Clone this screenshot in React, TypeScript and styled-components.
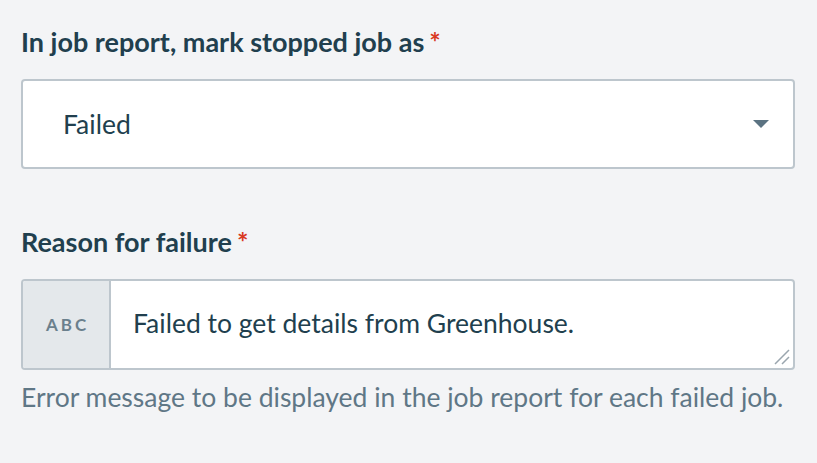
import React from 'react';
import styled, { createGlobalStyle } from 'styled-components';

const colors = {
  page: '#f3f4f6',
  ink: '#213f4e',
  muted: '#5f7786',
  border: '#bdc6cd',
  addon: '#e4e8eb',
  required: '#d9391f',
};

const GlobalStyle = createGlobalStyle`
  html, body {
    margin: 0;
    padding: 0;
    background: ${colors.page};
  }
  body {
    font-family: Lato, "Noto Sans", sans-serif;
    color: ${colors.ink};
  }
`;

const Page = styled.div`
  width: 817px;
  height: 463px;
  box-sizing: border-box;
  padding: 24px 22px 0 21px;
  display: flex;
  flex-direction: column;
`;

const Field = styled.div<{ $gap?: number }>`
  display: flex;
  flex-direction: column;
  margin-bottom: ${p => p.$gap ?? 0}px;
`;

const Label = styled.label`
  font-size: 27px;
  font-weight: 700;
  line-height: 36px;
  color: ${colors.ink};
  margin-bottom: 19px;
`;

const Required = styled.span`
  color: ${colors.required};
  margin-left: 5px;
`;

const SelectBox = styled.div`
  height: 90px;
  box-sizing: border-box;
  background: #fff;
  border: 2px solid ${colors.border};
  border-radius: 4px;
  display: flex;
  align-items: center;
  justify-content: space-between;
  padding: 0 24px 0 40px;
  font-size: 26.5px;
`;

const Caret = styled.span`
  width: 0;
  height: 0;
  border-left: 8px solid transparent;
  border-right: 8px solid transparent;
  border-top: 8px solid #5b7382;
`;

const TextBox = styled.div`
  height: 91px;
  box-sizing: border-box;
  background: #fff;
  border: 2px solid ${colors.border};
  border-radius: 4px;
  display: flex;
  position: relative;
  overflow: hidden;
`;

const Addon = styled.div`
  width: 88px;
  flex-shrink: 0;
  background: ${colors.addon};
  border-right: 2px solid ${colors.border};
  display: flex;
  align-items: center;
  justify-content: center;
  font-size: 17px;
  font-weight: 700;
  letter-spacing: 3px;
  color: #6b808d;
  padding-left: 3px;
  box-sizing: border-box;
`;

const TextValue = styled.div`
  flex: 1;
  display: flex;
  align-items: center;
  padding-left: 22px;
  font-size: 26.5px;
  padding-bottom: 4px;
`;

const Grip = styled.svg`
  position: absolute;
  right: 3px;
  bottom: 3px;
`;

const Help = styled.div`
  margin-top: 12px;
  font-size: 26.5px;
  line-height: 1.2;
  color: ${colors.muted};
`;

export default function App() {
  return (
    <>
      <GlobalStyle />
      <Page>
        <Field $gap={55}>
          <Label>
            In job report, mark stopped job as<Required>*</Required>
          </Label>
          <SelectBox>
            <span>Failed</span>
            <Caret />
          </SelectBox>
        </Field>
        <Field>
          <Label>
            Reason for failure<Required>*</Required>
          </Label>
          <TextBox>
            <Addon>ABC</Addon>
            <TextValue>Failed to get details from Greenhouse.</TextValue>
            <Grip width="16" height="16" viewBox="0 0 16 16">
              <path d="M15 1 L1 15 M15 8 L8 15" stroke="#9aa6ae" strokeWidth="1.5" />
            </Grip>
          </TextBox>
          <Help>Error message to be displayed in the job report for each failed job.</Help>
        </Field>
      </Page>
    </>
  );
}
